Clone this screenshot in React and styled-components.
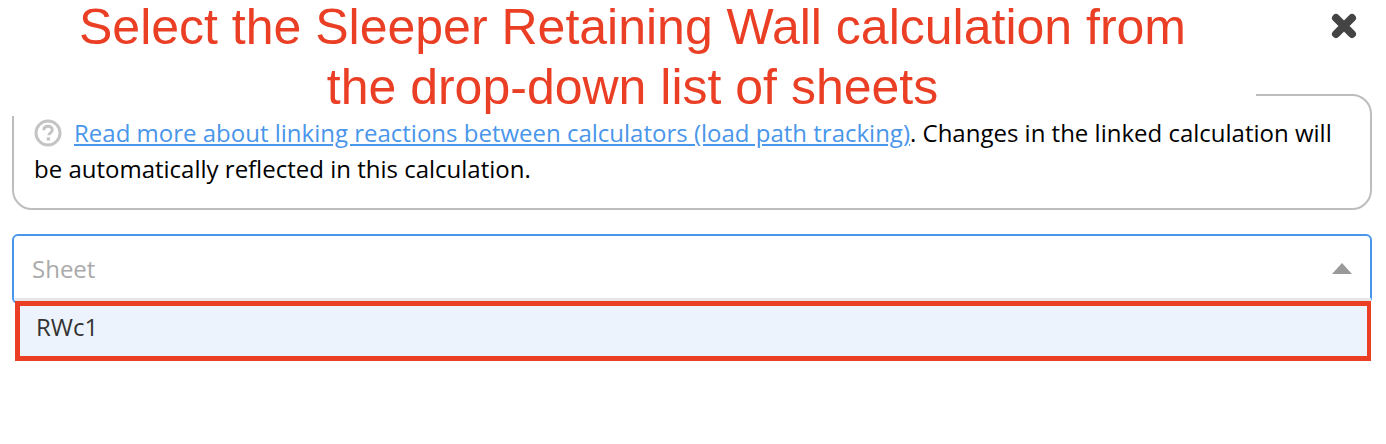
import React from "react";
import styled, { createGlobalStyle } from "styled-components";

const GlobalStyle = createGlobalStyle`
  html, body {
    margin: 0;
    padding: 0;
    background: #fff;
  }
`;

const App = () => {
  return (
    <Page>
      <GlobalStyle />
      <Annotation>
        Select the Sleeper Retaining Wall calculation from
        <br />
        the drop-down list of sheets
      </Annotation>
      <CloseIcon viewBox="0 0 24 24" aria-label="Close">
        <path d="M5.6 5.6 L18.4 18.4 M18.4 5.6 L5.6 18.4" />
      </CloseIcon>
      <NoteBox>
        <HelpIcon viewBox="0 0 28 28">
          <circle cx="14" cy="14" r="12" />
          <path d="M9.8 11.2c0-2.6 1.9-4 4.3-4 2.3 0 4.2 1.3 4.2 3.6 0 3-3.4 3-3.4 5.4" />
          <rect x="12.8" y="18.2" width="3.2" height="3.2" rx=".5" />
        </HelpIcon>
        <NoteLink href="#">
          Read more about linking reactions between calculators (load path
          tracking)
        </NoteLink>
        . Changes in the linked calculation will be automatically reflected in
        this calculation.
      </NoteBox>
      <SelectWrap>
        <SelectControl>
          <Placeholder>Sheet</Placeholder>
          <Caret />
        </SelectControl>
        <Menu>
          <Option>RWc1</Option>
        </Menu>
      </SelectWrap>
    </Page>
  );
};

const Page = styled.div`
  position: relative;
  box-sizing: border-box;
  width: 1386px;
  height: 444px;
  padding: 94px 14px 0 12px;
  overflow: hidden;
  background: #fff;
  font-family: "Open Sans", sans-serif;
`;

const Annotation = styled.div`
  position: absolute;
  z-index: 2;
  top: -3px;
  left: 0;
  box-sizing: border-box;
  width: 1256px;
  height: 119px;
  padding-left: 9px;
  background: #fff;
  color: #ea3f25;
  font-family: "Liberation Sans", Arial, sans-serif;
  font-size: 50px;
  line-height: 60px;
  text-align: center;
  white-space: nowrap;
`;

const CloseIcon = styled.svg`
  position: absolute;
  top: 11px;
  left: 1329px;
  width: 30px;
  height: 30px;

  path {
    fill: none;
    stroke: #444;
    stroke-width: 6.4;
    stroke-linecap: round;
  }
`;

const NoteBox = styled.div`
  box-sizing: border-box;
  height: 116px;
  padding: 19px 20px 0;
  border: 2px solid #bdbdbd;
  border-radius: 20px;
  color: #000;
  font-size: 24px;
  line-height: 36px;
`;

const HelpIcon = styled.svg`
  display: inline-block;
  width: 28px;
  height: 28px;
  margin-right: 12px;
  vertical-align: -5px;

  circle,
  path {
    fill: none;
    stroke: #c4c4c4;
    stroke-width: 3;
  }

  rect {
    fill: #c4c4c4;
  }
`;

const NoteLink = styled.a`
  color: #4a96ea;
  text-decoration: underline;
`;

const SelectWrap = styled.div`
  position: relative;
  margin-top: 24px;
`;

const SelectControl = styled.div`
  box-sizing: border-box;
  display: flex;
  align-items: center;
  justify-content: space-between;
  height: 70px;
  padding: 0 18px 2px 18px;
  border: 2px solid #4a96ea;
  border-radius: 6px;
  background: #fff;
`;

const Placeholder = styled.span`
  color: #aaa;
  font-size: 24px;
`;

const Caret = styled.span`
  width: 0;
  height: 0;
  border-left: 10px solid transparent;
  border-right: 10px solid transparent;
  border-bottom: 11px solid #999;
`;

const Menu = styled.div`
  position: absolute;
  top: 64px;
  left: 3px;
  right: 1px;
  border-top: 3px solid #e6e6e6;
`;

const Option = styled.div`
  box-sizing: border-box;
  height: 60px;
  padding-left: 16px;
  border: 5px solid #ea3f25;
  border-right-width: 4px;
  background: #edf3fc;
  color: #333;
  font-size: 24px;
  line-height: 42px;
`;

export default App;
